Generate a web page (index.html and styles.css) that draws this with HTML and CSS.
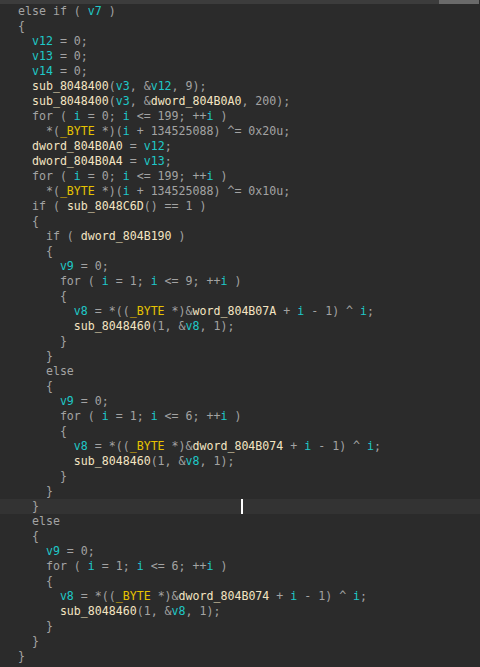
FILE: index.html
```html
<!DOCTYPE html>
<html>
<head>
<meta charset="utf-8">
<link rel="stylesheet" href="styles.css">
</head>
<body>
<div class="topbar"><div class="topbar-fill"></div><div class="topbar-thumb"></div></div>
<div class="code">
<div class="ln">else if ( <span class="v">v7</span> )</div>
<div class="ln">{</div>
<div class="ln">  <span class="v">v12</span> = 0;</div>
<div class="ln">  <span class="v">v13</span> = 0;</div>
<div class="ln">  <span class="v">v14</span> = 0;</div>
<div class="ln">  <span class="f">sub_8048400</span>(<span class="v">v3</span>, &amp;<span class="v">v12</span>, 9);</div>
<div class="ln">  <span class="f">sub_8048400</span>(<span class="v">v3</span>, &amp;<span class="f">dword_804B0A0</span>, 200);</div>
<div class="ln">  for ( <span class="v">i</span> = 0; <span class="v">i</span> &lt;= 199; ++<span class="v">i</span> )</div>
<div class="ln">    *(<span class="t">_BYTE</span> *)(<span class="v">i</span> + 134525088) ^= 0x20u;</div>
<div class="ln">  <span class="f">dword_804B0A0</span> = <span class="v">v12</span>;</div>
<div class="ln">  <span class="f">dword_804B0A4</span> = <span class="v">v13</span>;</div>
<div class="ln">  for ( <span class="v">i</span> = 0; <span class="v">i</span> &lt;= 199; ++<span class="v">i</span> )</div>
<div class="ln">    *(<span class="t">_BYTE</span> *)(<span class="v">i</span> + 134525088) ^= 0x10u;</div>
<div class="ln">  if ( <span class="f">sub_8048C6D</span>() == 1 )</div>
<div class="ln">  {</div>
<div class="ln">    if ( <span class="f">dword_804B190</span> )</div>
<div class="ln">    {</div>
<div class="ln">      <span class="v">v9</span> = 0;</div>
<div class="ln">      for ( <span class="v">i</span> = 1; <span class="v">i</span> &lt;= 9; ++<span class="v">i</span> )</div>
<div class="ln">      {</div>
<div class="ln">        <span class="v">v8</span> = *((<span class="t">_BYTE</span> *)&amp;<span class="f">word_804B07A</span> + <span class="v">i</span> - 1) ^ <span class="v">i</span>;</div>
<div class="ln">        <span class="f">sub_8048460</span>(1, &amp;<span class="v">v8</span>, 1);</div>
<div class="ln">      }</div>
<div class="ln">    }</div>
<div class="ln">    else</div>
<div class="ln">    {</div>
<div class="ln">      <span class="v">v9</span> = 0;</div>
<div class="ln">      for ( <span class="v">i</span> = 1; <span class="v">i</span> &lt;= 6; ++<span class="v">i</span> )</div>
<div class="ln">      {</div>
<div class="ln">        <span class="v">v8</span> = *((<span class="t">_BYTE</span> *)&amp;<span class="f">dword_804B074</span> + <span class="v">i</span> - 1) ^ <span class="v">i</span>;</div>
<div class="ln">        <span class="f">sub_8048460</span>(1, &amp;<span class="v">v8</span>, 1);</div>
<div class="ln">      }</div>
<div class="ln">    }</div>
<div class="ln current">  }<span class="cursor"></span></div>
<div class="ln">  else</div>
<div class="ln">  {</div>
<div class="ln">    <span class="v">v9</span> = 0;</div>
<div class="ln">    for ( <span class="v">i</span> = 1; <span class="v">i</span> &lt;= 6; ++<span class="v">i</span> )</div>
<div class="ln">    {</div>
<div class="ln">      <span class="v">v8</span> = *((<span class="t">_BYTE</span> *)&amp;<span class="f">dword_804B074</span> + <span class="v">i</span> - 1) ^ <span class="v">i</span>;</div>
<div class="ln">      <span class="f">sub_8048460</span>(1, &amp;<span class="v">v8</span>, 1);</div>
<div class="ln">    }</div>
<div class="ln">  }</div>
<div class="ln">}</div>
</div>
</body>
</html>
```
FILE: styles.css
```css
html, body {
  margin: 0;
  padding: 0;
  background: #2b2b2b;
  height: 100%;
  overflow: hidden;
}
.topbar {
  display: flex;
  height: 4px;
}
.topbar-fill {
  flex: 1;
  background: #3c3c3c;
}
.topbar-thumb {
  width: 40px;
  margin-right: 1px;
  background: #6a6a6a;
}
.code {
  font-family: "DejaVu Sans Mono", monospace;
  font-size: 11.6px;
  line-height: 15px;
  color: #a3a3a3;
}
.ln {
  white-space: pre;
  height: 15px;
  padding-left: 18px;
  position: relative;
}
.ln.current {
  background: #333333;
}
.v { color: #1fc8c8; }
.f { color: #f3e4c2; }
.t { color: #e6c300; }
.cursor {
  position: absolute;
  left: 241px;
  top: 0;
  width: 2px;
  height: 15px;
  background: #ffffff;
}
```
